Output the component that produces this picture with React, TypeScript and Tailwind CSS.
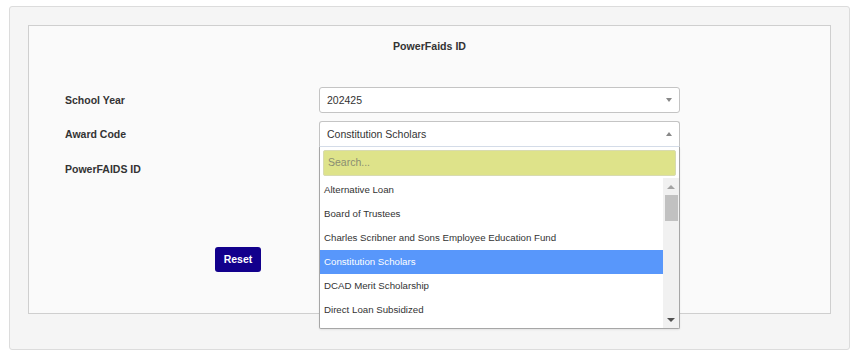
import React from 'react';

const awardCodes = [
  'Alternative Loan',
  'Board of Trustees',
  'Charles Scribner and Sons Employee Education Fund',
  'Constitution Scholars',
  'DCAD Merit Scholarship',
  'Direct Loan Subsidized',
];

function Caret({ up }: { up?: boolean }) {
  return (
    <span
      className={`absolute right-[7px] top-1/2 -translate-y-1/2 h-0 w-0 border-x-[3.5px] border-x-transparent ${
        up ? 'border-b-[4px] border-b-[#888]' : 'border-t-[4px] border-t-[#888]'
      }`}
    />
  );
}

function SelectBox({ value, open }: { value: string; open?: boolean }) {
  return (
    <div
      className={`relative h-[26px] w-[361px] border border-[#c4c4c4] bg-white pl-[7px] flex items-center text-[10.5px] text-[#333] ${
        open ? 'rounded-t-[3px] border-b-[#d5dde9]' : 'rounded-[3px]'
      }`}
    >
      <span className="pt-[2px]">{value}</span>
      <Caret up={open} />
    </div>
  );
}

function AwardDropdown() {
  return (
    <div className="absolute left-0 top-full z-10 h-[182px] w-[361px] border border-t-0 border-[#a6a6a6] bg-white rounded-b-[2px] shadow-[0_1px_2px_rgba(0,0,0,0.08)]">
      <div className="px-[3px] pt-[3px]">
        <div className="h-[26px] w-full rounded-[2px] border border-[#d8dbb0] bg-[#dee38a] pl-[4px] flex items-center text-[10.5px] text-[#8a8e72]">
          Search...
        </div>
      </div>
      <div className="mt-[2px] flex h-[150px] overflow-hidden">
        <ul className="flex-1">
          {awardCodes.map((name) => (
            <li
              key={name}
              className={`h-[24px] pl-[4px] flex items-center text-[9.7px] ${
                name === 'Constitution Scholars' ? 'bg-[#5897fb] text-white' : 'text-[#333]'
              }`}
            >
              {name}
            </li>
          ))}
        </ul>
        <div className="w-[16px] bg-[#f1f1f1] flex flex-col items-center">
          <div className="h-[17px] flex items-center justify-center">
            <span className="h-0 w-0 border-x-[4px] border-x-transparent border-b-[4px] border-b-[#a3a3a3]" />
          </div>
          <div className="h-[26px] w-[13px] bg-[#c1c1c1]" />
          <div className="flex-1" />
          <div className="h-[17px] flex items-center justify-center">
            <span className="h-0 w-0 border-x-[4px] border-x-transparent border-t-[4px] border-t-[#505050]" />
          </div>
        </div>
      </div>
    </div>
  );
}

export default function App() {
  return (
    <div className="min-h-screen bg-white pt-[6px] pl-[9px] font-['Liberation_Sans',Arial,sans-serif]">
      <div className="h-[344px] w-[841px] rounded-[3px] border border-[#dcdcdc] bg-[#f5f5f5] p-[18px]">
        <div className="h-[289px] w-[803px] border border-[#cfcfcf] bg-[#fafafa]">
          <h2 className="pt-[14px] text-center text-[10.6px] leading-[13px] font-bold text-[#333]">
            PowerFaids ID
          </h2>

          <div className="mt-[34px] flex flex-col gap-[8px] pl-[36px]">
            <div className="flex items-center">
              <label className="w-[254px] pt-[2px] text-[10.5px] font-bold text-[#333]">School Year</label>
              <SelectBox value="202425" />
            </div>
            <div className="flex items-center">
              <label className="w-[254px] pt-[2px] text-[10.5px] font-bold text-[#333]">Award Code</label>
              <div className="relative">
                <SelectBox value="Constitution Scholars" open />
                <AwardDropdown />
              </div>
            </div>
            <div className="flex h-[26px] items-center">
              <label className="w-[254px] pt-[3px] text-[10.5px] font-bold text-[#333]">PowerFAIDS ID</label>
            </div>
          </div>

          <div className="mt-[65px] pl-[186px]">
            <button className="h-[25px] w-[46px] rounded-[3px] bg-[#12008c] text-[10.5px] font-bold text-white">
              Reset
            </button>
          </div>
        </div>
      </div>
    </div>
  );
}
